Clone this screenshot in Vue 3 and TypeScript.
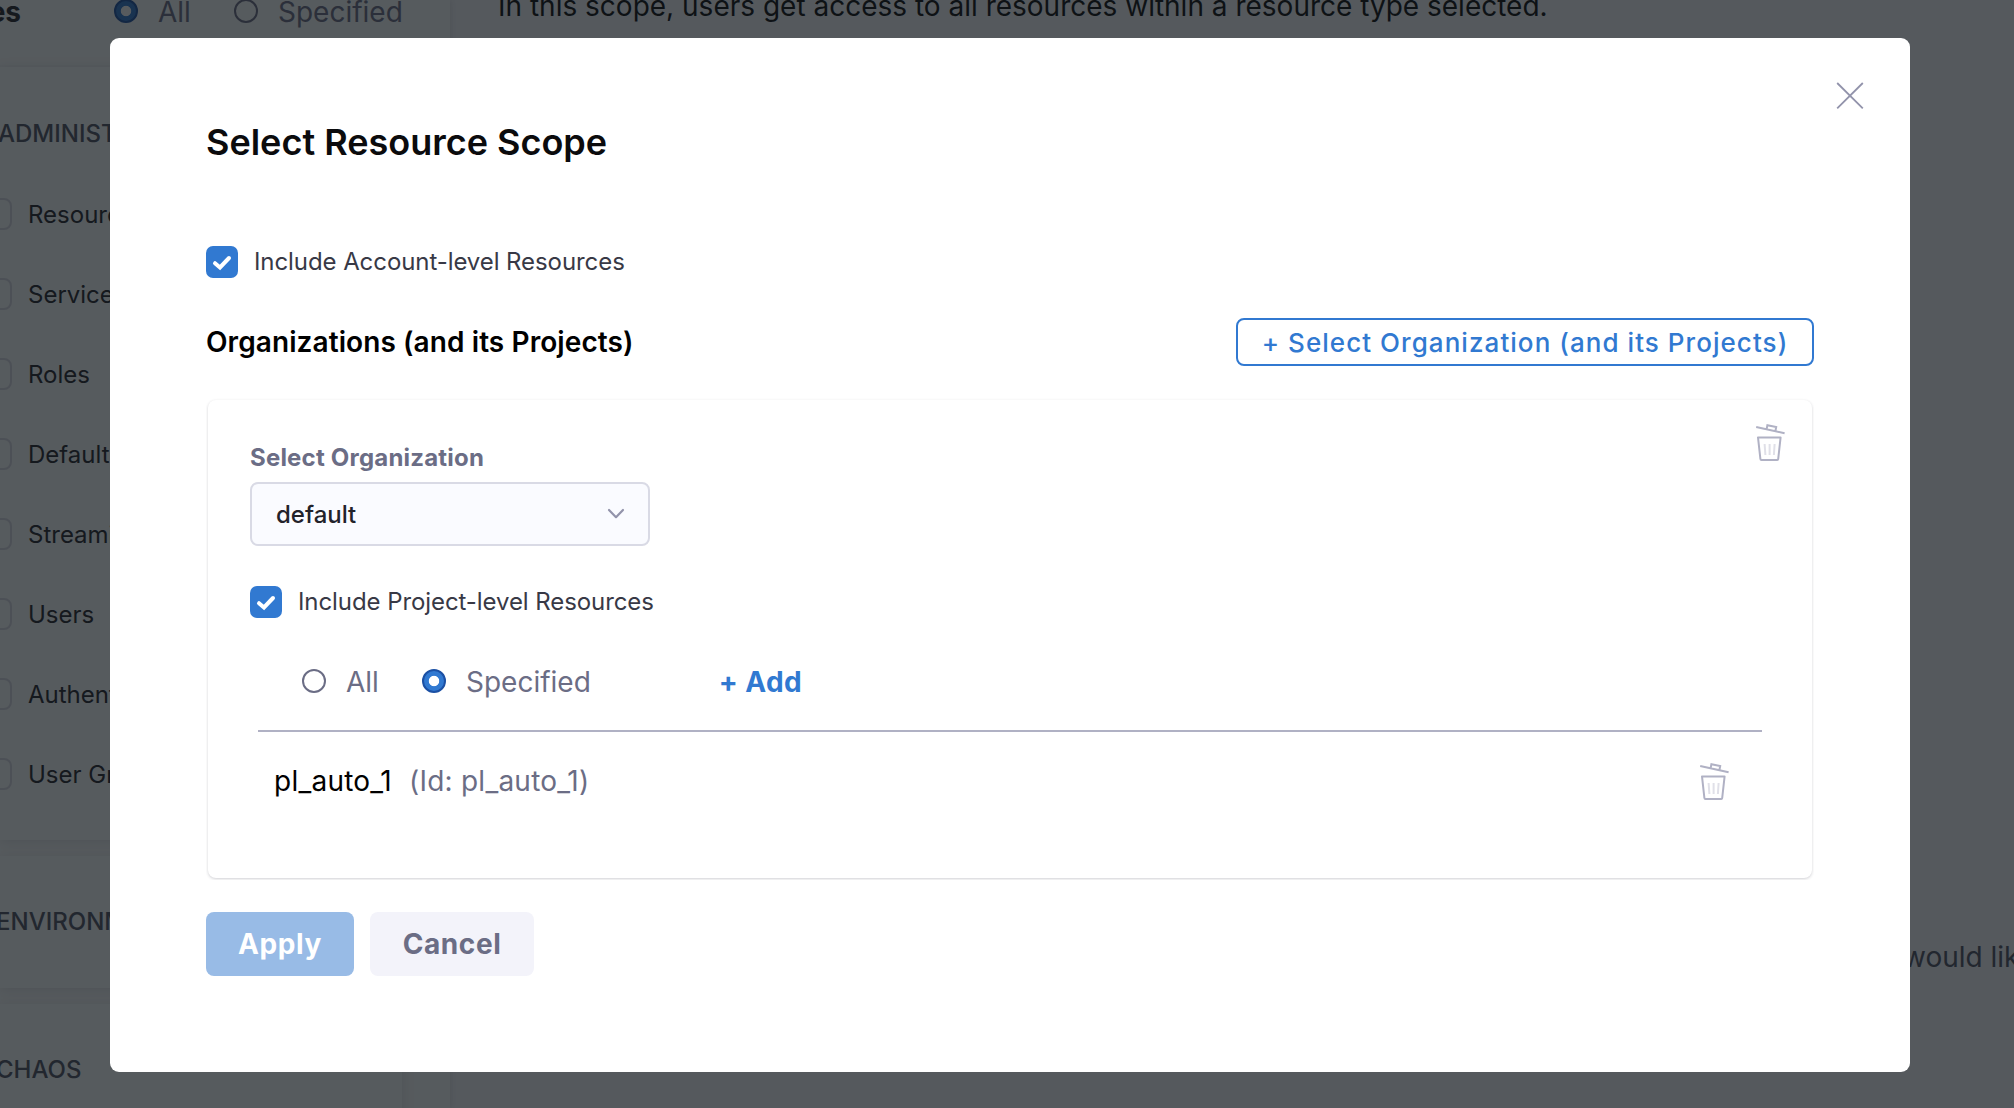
<script setup lang="ts">
import { ref } from 'vue'

const resourceTypes: string[] = [
  'Resource Groups',
  'Service Accounts',
  'Roles',
  'Default Settings',
  'Streaming',
  'Users',
  'Authentication',
  'User Groups',
]

const projects = ref([{ name: 'pl_auto_1', id: 'pl_auto_1' }])
</script>

<template>
  <div class="screen">
    <div class="page">
      <section class="sidebar">
        <header class="side-head">
          <strong class="side-title">Resources</strong>
          <i class="radio on"></i><span class="rlabel all">All</span>
          <i class="radio"></i><span class="rlabel">Specified</span>
        </header>
        <div class="group first">
          <h4>ADMINISTRATION</h4>
          <div v-for="t in resourceTypes" :key="t" class="type-row">
            <i class="box"></i><span>{{ t }}</span>
          </div>
        </div>
        <div class="group second"><h4>ENVIRONMENTS</h4></div>
        <div class="group third"><h4>CHAOS</h4></div>
      </section>
      <section class="main">
        <p class="hint">In this scope, users get access to all resources within a resource type selected.</p>
        <p class="hint2">would like to add</p>
      </section>
    </div>

    <div class="backdrop">
      <div class="modal" role="dialog">
        <svg class="close" viewBox="0 0 30 30" width="30" height="30">
          <path d="M2.2 2 27.8 27.4M27.8 2 2.2 27.4" fill="none" stroke="#9293ab" stroke-width="1.8" />
        </svg>
        <h1>Select Resource Scope</h1>

        <label class="check">
          <span class="tick"><svg viewBox="0 0 32 32" width="32" height="32"><path d="M9 17.2 14 21.5 23 12" /></svg></span>
          <span class="check-text">Include Account-level Resources</span>
        </label>

        <div class="org-head">
          <h2>Organizations (and its Projects)</h2>
          <button class="outline"><span>+ Select Organization (and its Projects)</span></button>
        </div>

        <div class="card-clip">
          <div class="card">
            <svg class="trash" viewBox="0 0 32 40" width="32" height="40">
              <g fill="none" stroke="#b0b1c4" stroke-width="2">
                <path d="M1.2 5 29.6 11.2M11.6 7.2 12.4 3.2 21.2 5 20.4 9" />
                <path d="M3 15.4H25.6L23.2 37q-.1 1-1 1H6.4q-.9 0-1-1Z" stroke-linejoin="round" />
                <path d="M9.6 22 10.4 33M14.6 22V33M19.6 22 18.9 33" stroke="#e0e0e8" />
              </g>
            </svg>
            <div class="field-label">Select Organization</div>
            <div class="select">
              <span>default</span>
              <svg viewBox="0 0 18 12" width="18" height="12"><path d="M2 2 9 9.2 16 2" fill="none" stroke="#9293ab" stroke-width="2.2" stroke-linecap="round" stroke-linejoin="round" /></svg>
            </div>
            <label class="check inner">
              <span class="tick"><svg viewBox="0 0 32 32" width="32" height="32"><path d="M9 17.2 14 21.5 23 12" /></svg></span>
              <span class="check-text">Include Project-level Resources</span>
            </label>
            <div class="choices">
              <i class="radio"></i><span class="rlabel all">All</span>
              <i class="radio on"></i><span class="rlabel">Specified</span>
              <a class="add">+ Add</a>
            </div>
            <div class="list">
              <div v-for="p in projects" :key="p.id" class="project">
                <span class="pname">{{ p.name }}</span>
                <span class="pid">(Id: {{ p.id }})</span>
                <svg class="trash-row" viewBox="0 0 32 40" width="32" height="40">
                  <g fill="none" stroke="#b0b1c4" stroke-width="2">
                    <path d="M1.2 5 29.6 11.2M11.6 7.2 12.4 3.2 21.2 5 20.4 9" />
                    <path d="M3 15.4H25.6L23.2 37q-.1 1-1 1H6.4q-.9 0-1-1Z" stroke-linejoin="round" />
                    <path d="M9.6 22 10.4 33M14.6 22V33M19.6 22 18.9 33" stroke="#e0e0e8" />
                  </g>
                </svg>
              </div>
            </div>
          </div>
        </div>

        <footer class="actions">
          <button class="apply">Apply</button>
          <button class="cancel">Cancel</button>
        </footer>
      </div>
    </div>
  </div>
</template>

<style>
body {
  margin: 0;
  overflow: hidden;
}
</style>

<style scoped>
* {
  box-sizing: border-box;
}
h1, h2, h4, p {
  margin: 0;
}
button {
  font-family: inherit;
  margin: 0;
  padding: 0;
  border: 0;
  white-space: nowrap;
}
.screen {
  position: relative;
  width: 2014px;
  height: 1108px;
  overflow: hidden;
  font-family: Inter, sans-serif;
  white-space: nowrap;
}
.page {
  display: flex;
  height: 1108px;
  background: #f8f8fc;
}
.sidebar {
  flex: none;
  width: 450px;
  height: 1108px;
  overflow: hidden;
  background: #fcfdfd;
  box-shadow: 1px 0 6px rgba(40, 41, 61, 0.12);
}
.side-head {
  display: flex;
  align-items: center;
  height: 67px;
  padding-bottom: 41px;
  border-bottom: 2px solid #f7f8f9;
}
.side-title {
  display: flex;
  justify-content: flex-end;
  width: 21px;
  margin-right: 93px;
  font-size: 28px;
  font-weight: 700;
  color: #22222a;
}
.radio {
  flex: none;
  width: 24px;
  height: 24px;
  margin-bottom: 2px;
  border-radius: 50%;
  border: 2px solid #6b6d85;
}
.radio.on {
  border-color: #1b50a4;
  background: radial-gradient(circle, #fff 0 4.8px, #3179d1 5.6px);
}
.rlabel {
  margin-left: 20px;
  font-size: 28px;
  line-height: 36px;
  color: #6b6d85;
}
.rlabel.all {
  width: 76px;
}
.group {
  width: 402px;
  box-shadow: 0 2px 12px rgba(40, 41, 61, 0.13);
  background: #fcfdfd;
}
.group h4 {
  margin-left: -4px;
  font-size: 24px;
  font-weight: 500;
  line-height: 32px;
  color: #4f5162;
}
.first {
  height: 773px;
  padding-top: 51px;
}
.first h4 {
  margin-left: -2px;
  margin-bottom: 24px;
}
.second {
  height: 132px;
  margin: 16px 0;
  padding-top: 50px;
}
.third {
  height: 140px;
  padding-top: 50px;
}
.type-row {
  display: flex;
  align-items: center;
  height: 80px;
  font-size: 24px;
  color: #22222a;
}
.box {
  flex: none;
  width: 32px;
  height: 32px;
  margin: 0 16px 0 -20px;
  border: 2px solid #d9dae5;
  border-radius: 8px;
}
.main {
  flex: 1;
}
.hint {
  margin: -12px 0 0 48px;
  font-size: 28px;
  line-height: 36px;
  color: #0b0b0d;
}
.hint2 {
  margin: 915px 0 0 1453px;
  font-size: 28px;
  line-height: 36px;
  color: #4f5162;
}
.backdrop {
  position: absolute;
  inset: 0;
  display: flex;
  padding: 38px 0 0 110px;
  background: rgba(16, 22, 26, 0.7);
}
.modal {
  position: relative;
  width: 1800px;
  height: 1034px;
  padding: 80px 96px 0;
  border-radius: 9px;
  background: #fff;
}
.close {
  position: absolute;
  top: 43px;
  right: 45px;
}
h1 {
  font-size: 36px;
  font-weight: 600;
  line-height: 48px;
  color: #0b0b0d;
}
.check {
  display: flex;
  align-items: center;
  height: 32px;
  margin-top: 80px;
}
.tick {
  width: 32px;
  height: 32px;
  border-radius: 7px;
  background: #3179d1;
}
.tick svg {
  display: block;
}
.tick path {
  fill: none;
  stroke: #fff;
  stroke-width: 4;
  stroke-linecap: round;
}
.check-text {
  margin-left: 16px;
  font-size: 24px;
  letter-spacing: -0.08px;
  color: #383946;
  line-height: 32px;
}
.org-head {
  display: flex;
  align-items: center;
  justify-content: space-between;
  height: 48px;
  margin-top: 40px;
}
h2 {
  font-size: 28px;
  font-weight: 600;
  letter-spacing: 0.09px;
  line-height: 36px;
  color: #000;
}
.outline {
  width: 578px;
  height: 48px;
  border: 2px solid #3179d1;
  border-radius: 8px;
  background: #fff;
  font-size: 26px;
  font-weight: 500;
  letter-spacing: 1.05px;
  color: #3179d1;
}
.card-clip {
  margin-top: 32px;
  height: 482px;
  padding: 2px;
  overflow: hidden;
}
.card {
  position: relative;
  height: 478px;
  padding: 42px 50px 0 42px;
  border-radius: 8px;
  background: #fff;
  box-shadow: 0 1px 3px rgba(40, 41, 61, 0.22);
}
.trash {
  position: absolute;
  top: 22px;
  right: 25px;
}
.field-label {
  height: 40px;
  font-size: 24px;
  font-weight: 700;
  letter-spacing: 0.2px;
  line-height: 32px;
  color: #6b6d85;
}
.select {
  display: flex;
  align-items: center;
  justify-content: space-between;
  width: 400px;
  height: 64px;
  padding: 0 23px 0 24px;
  border: 2px solid #d9dae5;
  border-radius: 8px;
  background: #fafbff;
  font-size: 24px;
  font-weight: 500;
  color: #22222a;
}
.check.inner {
  margin-top: 40px;
}
.choices {
  display: flex;
  align-items: center;
  height: 48px;
  margin: 40px 0 0 52px;
}
.add {
  margin-left: 128px;
  font-size: 28px;
  font-weight: 700;
  letter-spacing: 0.4px;
  color: #3179d1;
}
.list {
  margin: 24px 0 0 8px;
  border-top: 2px solid #b0b1c4;
}
.project {
  display: flex;
  align-items: center;
  height: 97px;
  padding: 0 31px 0 16px;
  font-size: 28px;
  letter-spacing: 0.24px;
}
.pname {
  color: #000;
}
.pid {
  margin-left: 17px;
  color: #6b6d85;
}
.trash-row {
  margin-left: auto;
}
.actions {
  display: flex;
  gap: 16px;
  margin-top: 32px;
}
.actions button {
  height: 64px;
  border-radius: 8px;
  font-size: 28px;
  font-weight: 700;
  letter-spacing: 0.6px;
}
.apply {
  width: 148px;
  background: #98bbe6;
  color: #fff;
}
.cancel {
  width: 164px;
  background: #f3f3fa;
  color: #6b6d85;
}
</style>
